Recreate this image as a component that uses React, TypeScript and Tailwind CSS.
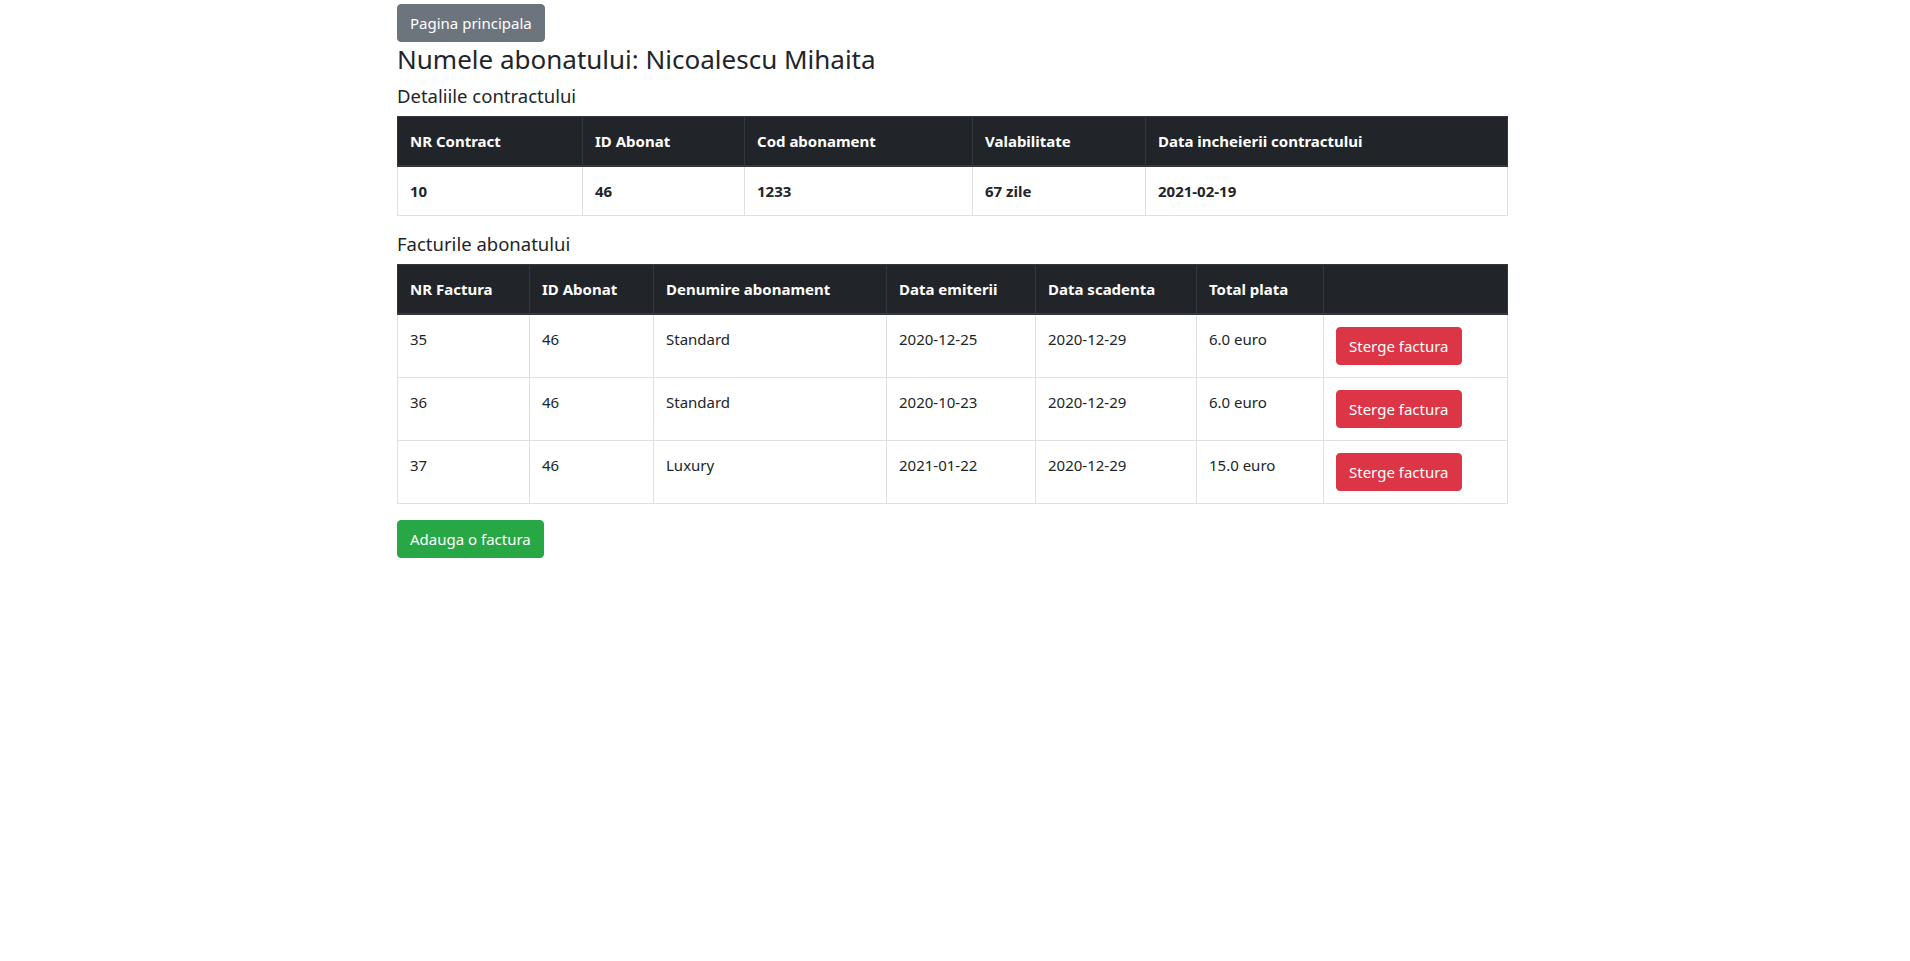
import React from "react";

const contractHead = [
  { label: "NR Contract", w: "w-[185px]" },
  { label: "ID Abonat", w: "w-[162px]" },
  { label: "Cod abonament", w: "w-[228px]" },
  { label: "Valabilitate", w: "w-[173px]" },
  { label: "Data incheierii contractului", w: "w-[362px]" },
];

const contract = ["10", "46", "1233", "67 zile", "2021-02-19"];

const invoiceHead = [
  { label: "NR Factura", w: "w-[132px]" },
  { label: "ID Abonat", w: "w-[124px]" },
  { label: "Denumire abonament", w: "w-[233px]" },
  { label: "Data emiterii", w: "w-[149px]" },
  { label: "Data scadenta", w: "w-[161px]" },
  { label: "Total plata", w: "w-[127px]" },
  { label: "", w: "w-[184px]" },
];

const invoices = [
  ["35", "46", "Standard", "2020-12-25", "2020-12-29", "6.0 euro"],
  ["36", "46", "Standard", "2020-10-23", "2020-12-29", "6.0 euro"],
  ["37", "46", "Luxury", "2021-01-22", "2020-12-29", "15.0 euro"],
];

// Noto Sans runs wider than the original system font, so sizes are trimmed ~6%
function HeadCell({ label, w }: { label: string; w: string }) {
  return (
    <th
      className={`${w} border border-[#32383e] border-b-2 bg-[#212529] p-3 text-left align-bottom font-bold text-white`}
    >
      {label}
    </th>
  );
}

export default function App() {
  return (
    <div
      className="min-h-screen bg-white pr-[6px] text-[15px] leading-6 text-[#212529]"
      style={{ fontFamily: '"Noto Sans", "Open Sans", sans-serif' }}
    >
      <div className="mx-auto w-[1140px] px-[15px] pt-1">
        <button className="rounded border border-[#6c757d] bg-[#6c757d] px-3 py-[6px] text-[15px] leading-6 text-white">
          Pagina principala
        </button>
        <h3 className="mb-2 text-[26px] leading-[34px] font-normal">
          Numele abonatului: Nicoalescu Mihaita
        </h3>
        <h5 className="mb-2 text-[18.5px] leading-6 font-normal">Detaliile contractului</h5>

        <table className="mb-4 w-full table-fixed border-collapse">
          <thead>
            <tr>
              {contractHead.map((h) => (
                <HeadCell key={h.label} label={h.label} w={h.w} />
              ))}
            </tr>
          </thead>
          <tbody>
            <tr>
              {contract.map((c, i) => (
                <th key={i} className="border border-[#dee2e6] p-3 text-left align-top font-bold">
                  {c}
                </th>
              ))}
            </tr>
          </tbody>
        </table>

        <h5 className="mb-2 text-[18.5px] leading-6 font-normal">Facturile abonatului</h5>

        <table className="mb-4 w-full table-fixed border-collapse">
          <thead>
            <tr>
              {invoiceHead.map((h, i) => (
                <HeadCell key={i} label={h.label} w={h.w} />
              ))}
            </tr>
          </thead>
          <tbody>
            {invoices.map((row) => (
              <tr key={row[0]}>
                {row.map((c, i) => (
                  <td key={i} className="border border-[#dee2e6] p-3 align-top">
                    {c}
                  </td>
                ))}
                <td className="border border-[#dee2e6] p-3 align-top">
                  <button className="rounded border border-[#dc3545] bg-[#dc3545] px-3 py-[6px] text-[15px] leading-6 text-white">
                    Sterge factura
                  </button>
                </td>
              </tr>
            ))}
          </tbody>
        </table>

        <button className="rounded border border-[#28a745] bg-[#28a745] px-3 py-[6px] text-[15px] leading-6 text-white">
          Adauga o factura
        </button>
      </div>
    </div>
  );
}
